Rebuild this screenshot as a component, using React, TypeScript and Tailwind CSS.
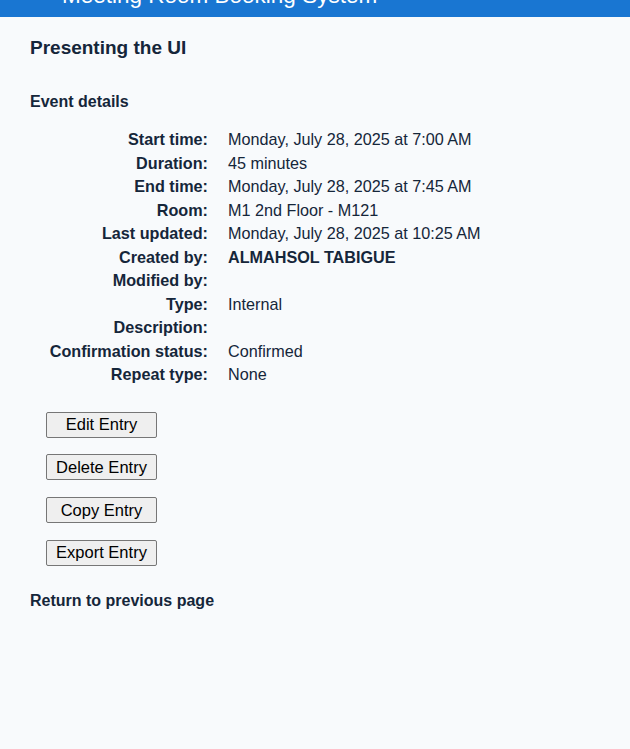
import React from 'react';

const details: { label: string; value: string; strong?: boolean }[] = [
  { label: 'Start time:', value: 'Monday, July 28, 2025 at 7:00 AM' },
  { label: 'Duration:', value: '45 minutes' },
  { label: 'End time:', value: 'Monday, July 28, 2025 at 7:45 AM' },
  { label: 'Room:', value: 'M1 2nd Floor - M121' },
  { label: 'Last updated:', value: 'Monday, July 28, 2025 at 10:25 AM' },
  { label: 'Created by:', value: 'ALMAHSOL TABIGUE', strong: true },
  { label: 'Modified by:', value: '' },
  { label: 'Type:', value: 'Internal' },
  { label: 'Description:', value: '' },
  { label: 'Confirmation status:', value: 'Confirmed' },
  { label: 'Repeat type:', value: 'None' },
];

const actions = ['Edit Entry', 'Delete Entry', 'Copy Entry', 'Export Entry'];

const App = () => {
  return (
    <div className="min-h-[749px] bg-[#f8fafc] font-['Liberation_Sans',Arial,sans-serif] text-[#15263a]">
      <header className="h-[17px] overflow-hidden bg-[#1976d2]">
        <div className="-mt-[17px] pl-[62px] text-[22.5px] leading-[26px] text-white whitespace-nowrap">
          Meeting Room Booking System
        </div>
      </header>

      <main className="px-[30px]">
        <h2 className="mt-[19px] text-[19px] leading-[24px] font-bold">Presenting the UI</h2>

        <h3 className="mt-[32px] text-[16px] leading-[20px] font-bold">Event details</h3>

        <div className="mt-[16px] grid grid-cols-[178px_1fr] gap-x-[20px] text-[16.2px] leading-[23.5px]">
          {details.map((row) => (
            <React.Fragment key={row.label}>
              <div className="text-right font-bold whitespace-nowrap">{row.label}</div>
              <div className={row.strong ? 'font-bold' : ''}>{row.value || '\u00a0'}</div>
            </React.Fragment>
          ))}
        </div>

        <div className="mt-[25px] ml-[16px] flex flex-col items-start gap-[16.7px]">
          {actions.map((a) => (
            <button
              key={a}
              className="w-[111px] h-[26px] rounded-[2px] border border-[#767676] bg-[#efefef] text-[16.5px] leading-none text-black"
            >
              {a}
            </button>
          ))}
        </div>

        <div className="mt-[25px] text-[16px] leading-[20px] font-bold">Return to previous page</div>
      </main>
    </div>
  );
};

export default App;
